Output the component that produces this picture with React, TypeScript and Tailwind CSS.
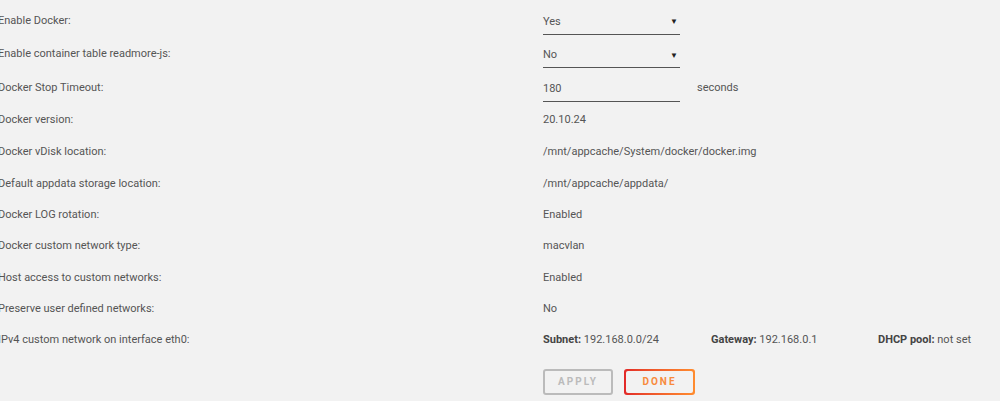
import React from "react";

function Select({ value }: { value: string }) {
  return (
    <div className="w-[137px] h-[24px] border-b border-[#555] flex items-center justify-between pr-[2px] mt-[3px]">
      <span>{value}</span>
      <span className="text-[8px] text-[#222]">▼</span>
    </div>
  );
}

export default function App() {
  const data: [string, string, React.ReactNode][] = [
    ["Enable Docker:", "h-[33px]", <Select value="Yes" />],
    ["Enable container table readmore-js:", "h-[34px]", <Select value="No" />],
    [
      "Docker Stop Timeout:",
      "h-[33px]",
      <div className="flex items-center">
        <div className="w-[137px] h-[24px] border-b border-[#555] flex items-center mt-[3px]">180</div>
        <span className="ml-[17px]">seconds</span>
      </div>,
    ],
    ["Docker version:", "h-[32px]", "20.10.24"],
    ["Docker vDisk location:", "h-[32px]", "/mnt/appcache/System/docker/docker.img"],
    ["Default appdata storage location:", "h-[31px]", "/mnt/appcache/appdata/"],
    ["Docker LOG rotation:", "h-[31px]", "Enabled"],
    ["Docker custom network type:", "h-[32px]", "macvlan"],
    ["Host access to custom networks:", "h-[31px]", "Enabled"],
    ["Preserve user defined networks:", "h-[31px]", "No"],
    [
      "IPv4 custom network on interface eth0:",
      "h-[32px]",
      <div className="flex">
        <span className="w-[168px]">
          <b className="font-bold text-[#444]">Subnet:</b> 192.168.0.0/24
        </span>
        <span className="w-[167px]">
          <b className="font-bold text-[#444]">Gateway:</b> 192.168.0.1
        </span>
        <span>
          <b className="font-bold text-[#444]">DHCP pool:</b> not set
        </span>
      </div>,
    ],
  ];
  return (
    <div
      className="w-[1000px] h-[401px] bg-[#f2f2f2] text-[#555] text-[11px] overflow-hidden"
      style={{ fontFamily: 'Roboto, "Open Sans", sans-serif' }}
    >
      <div className="pt-[4.5px] ml-[-2px]">
        {data.map(([label, h, value], i) => (
          <div key={i} className={`flex items-center ${h}`}>
            <div className="w-[545px] shrink-0">{label}</div>
            <div>{value}</div>
          </div>
        ))}
      </div>
      <div className="flex gap-[11px] ml-[543px] mt-[12px]">
        <button className="w-[70px] h-[26px] border-2 border-[#bbb] rounded-[3px] text-[#bbb] text-[10px] font-bold tracking-[2px]">
          APPLY
        </button>
        <div className="w-[71px] h-[26px] rounded-[3px] p-[2px] bg-gradient-to-r from-[#e22828] to-[#ff8c2f]">
          <div className="w-full h-full bg-[#f2f2f2] rounded-[2px] flex items-center justify-center">
            <span className="text-[10px] font-bold tracking-[2px] text-[#f88a3c]">DONE</span>
          </div>
        </div>
      </div>
    </div>
  );
}
